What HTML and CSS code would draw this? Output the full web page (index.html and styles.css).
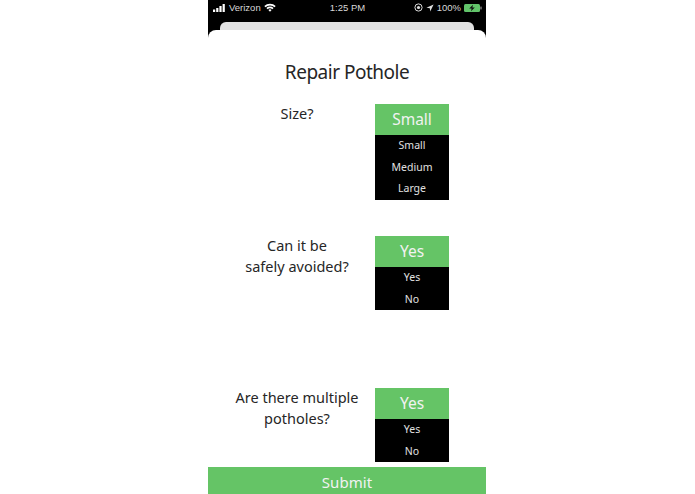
FILE: index.html
```html
<!DOCTYPE html>
<html lang="en">
<head>
<meta charset="utf-8">
<title>Repair Pothole</title>
<link rel="stylesheet" href="styles.css">
</head>
<body>
<main class="phone">
  <header class="status">
    <div class="status-left">
      <svg class="signal" width="13" height="8" viewBox="0 0 13 8"><rect x="0" y="5.5" width="2.2" height="2.5" fill="#fff"/><rect x="3.2" y="4" width="2.2" height="4" fill="#fff"/><rect x="6.4" y="2" width="2.2" height="6" fill="#fff"/><rect x="9.6" y="0" width="2.2" height="8" fill="#fff"/></svg>
      <span>Verizon</span>
      <svg class="wifi" width="12" height="9" viewBox="0 0 12 9"><path d="M0.3 3 A8.2 8.2 0 0 1 11.7 3 L10.5 4.2 A6.5 6.5 0 0 0 1.5 4.2Z M2.4 5 A5.3 5.3 0 0 1 9.6 5 L8.4 6.2 A3.6 3.6 0 0 0 3.6 6.2Z M4.4 7 A2.4 2.4 0 0 1 7.6 7 L6 8.8Z" fill="#fff"/></svg>
    </div>
    <div class="status-time">1:25 PM</div>
    <div class="status-right">
      <svg width="9" height="9" viewBox="0 0 9 9"><circle cx="4.5" cy="4.5" r="3.6" fill="none" stroke="#ddd" stroke-width="1"/><circle cx="4.5" cy="4.5" r="1.6" fill="#ddd"/></svg>
      <svg width="8" height="8" viewBox="0 0 8 8"><path d="M7.6 0.4 L0.4 3.8 L3.8 4.2 L4.2 7.6Z" fill="#ddd"/></svg>
      <span>100%</span>
      <svg width="18" height="8" viewBox="0 0 18 8"><rect x="0" y="0" width="16" height="8" rx="1.5" fill="#62c46a"/><rect x="16.4" y="2.6" width="1.2" height="2.8" fill="#999"/><path d="M9 0.8 L5.2 4.6 L7.6 4.6 L7 7.2 L10.8 3.4 L8.4 3.4Z" fill="#111"/></svg>
    </div>
  </header>
  <div class="backcard"></div>
  <section class="sheet">
    <h1 class="title">Repair Pothole</h1>
    <div class="row row-size">
      <p class="label">Size?</p>
      <div class="select">
        <div class="selected">Small</div>
        <ul class="options"><li>Small</li><li>Medium</li><li>Large</li></ul>
      </div>
    </div>
    <div class="row row-avoid">
      <p class="label">Can it be<br>safely avoided?</p>
      <div class="select">
        <div class="selected">Yes</div>
        <ul class="options"><li>Yes</li><li>No</li></ul>
      </div>
    </div>
    <div class="row row-multi">
      <p class="label">Are there multiple<br>potholes?</p>
      <div class="select">
        <div class="selected">Yes</div>
        <ul class="options"><li>Yes</li><li>No</li></ul>
      </div>
    </div>
    <button class="submit" type="button">Submit</button>
  </section>
</main>
</body>
</html>
```
FILE: styles.css
```css
* { box-sizing: border-box; }
html, body { height: 494px; overflow: hidden; }
body {
  margin: 0;
  background: #fff;
  font-family: "Noto Sans", "Open Sans", sans-serif;
  color: #262626;
}
.phone {
  width: 278px;
  height: 494px;
  margin-left: 208px;
  background: #000;
  display: flex;
  flex-direction: column;
  overflow: hidden;
}
.status {
  height: 15px;
  flex: none;
  padding: 0 4px 0 5px;
  display: grid;
  grid-template-columns: 1fr auto 1fr;
  align-items: center;
  color: #d8d8d8;
  font-family: "Liberation Sans", sans-serif;
  font-size: 9.5px;
}
.status-left, .status-right { display: flex; align-items: center; gap: 3px; }
.status-right { justify-content: flex-end; gap: 3px; }
.backcard {
  flex: none;
  height: 14px;
  margin: 7px 12px 0;
  background: #e2e2e2;
  border-radius: 6px 6px 0 0;
}
.sheet {
  flex: 1;
  margin-top: -6px;
  background: #fff;
  border-radius: 8px 8px 0 0;
  display: flex;
  flex-direction: column;
  min-height: 0;
}
.title {
  margin: 0;
  height: 74px;
  padding-top: 29px;
  text-align: center;
  font-size: 19px;
  letter-spacing: -0.5px;
  line-height: 26px;
  font-weight: 400;
}
.row { display: flex; align-items: flex-start; flex: none; }
.row-size { height: 132px; }
.row-avoid { height: 152px; }
.row-multi { height: 79px; }
.label {
  margin: -1px 0 0;
  width: 167px;
  padding-left: 11px;
  text-align: center;
  font-size: 14.5px;
  line-height: 21px;
}
.select { width: 74px; flex: none; }
.selected {
  height: 31px;
  background: #65c466;
  color: #f2f2f2;
  font-size: 15.5px;
  line-height: 30px;
  text-align: center;
}
.options {
  list-style: none;
  margin: 0;
  padding: 0;
  background: #000;
  color: #e0e0e0;
  font-size: 10.5px;
  text-align: center;
}
.options li { height: 21.5px; line-height: 21.5px; }
.submit {
  flex: none;
  height: 27px;
  border: 0;
  padding: 3px 0 0;
  margin: 0;
  background: #65c466;
  color: #f2f2f2;
  font-family: inherit;
  font-size: 15px;
  letter-spacing: 0.1px;
  line-height: 24px;
}
```
